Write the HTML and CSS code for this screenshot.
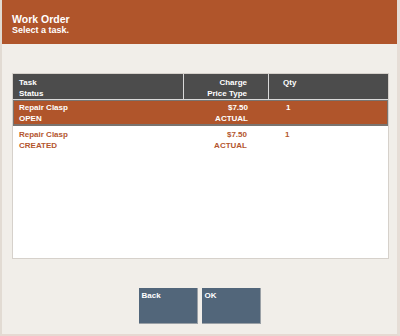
FILE: index.html
```html
<!DOCTYPE html>
<html lang="en">

<head>
  <meta charset="UTF-8" />
  <title>Work Order</title>
  <link rel="stylesheet" href="styles.css">
</head>

<body>

  <!-- Title bar -->
  <header class="title-bar">
    <div class="title">Work Order</div>
    <div class="subtitle">Select a task.</div>
  </header>

  <!-- Task list -->
  <div class="content">
    <div class="task-table">
      <div class="row head">
        <div class="cell">Task<br>Status</div>
        <div class="cell num">Charge<br>Price Type</div>
        <div class="cell qty">Qty</div>
      </div>
      <div class="row selected">
        <div class="cell">Repair Clasp<br>OPEN</div>
        <div class="cell num">$7.50<br>ACTUAL</div>
        <div class="cell qty">1</div>
      </div>
      <div class="row">
        <div class="cell">Repair Clasp<br>CREATED</div>
        <div class="cell num">$7.50<br>ACTUAL</div>
        <div class="cell qty">1</div>
      </div>
    </div>

    <!-- Buttons -->
    <div class="buttons">
      <button class="btn">Back</button>
      <button class="btn">OK</button>
    </div>
  </div>

</body>

</html>
```

FILE: styles.css
```css
body {
  margin: 0;
  width: 400px;
  height: 336px;
  background-color: #f1eee9;
  font-family: "Liberation Sans", Arial, sans-serif;
  font-weight: bold;
  box-sizing: border-box;
  border-left: 2px solid #e2dbd3;
  border-right: 3px solid #e6ddd6;
  border-bottom: 2px solid #e6d9d2;
}

/* Orange title bar */
.title-bar {
  background-color: #b0552b;
  color: #fff;
  height: 44px;
  box-sizing: border-box;
  padding: 14px 0 0 10px;
}

.title {
  font-size: 10.5px;
  line-height: 11px;
}

.subtitle {
  font-size: 9px;
  line-height: 10px;
}

.content {
  padding: 29px 0 0 10px;
}

/* Table */
.task-table {
  width: 377px;
  height: 186px;
  box-sizing: border-box;
  background-color: #fff;
  border: 1px solid #d6d1cb;
  font-size: 8px;
  line-height: 11px;
}

.row {
  display: grid;
  grid-template-columns: 170px 85px 1fr;
  height: 26px;
  box-sizing: border-box;
  color: #b4562e;
}

.cell {
  padding: 3px 6px 0 6px;
}

.cell.num {
  text-align: right;
  padding-right: 21px;
}

.cell.qty {
  padding-left: 17px;
}

.head {
  background-color: #4c4c4c;
  color: #fff;
  border-bottom: 1px solid #d9d9d9;
}

.head .cell + .cell {
  border-left: 1px solid #d9d9d9;
}

.head .cell.qty {
  padding-left: 14px;
}

.selected {
  background-color: #b0552b;
  color: #fff;
  border: 1px solid #7a7470;
  border-width: 1px 1px 2px 1px;
}

.selected .cell {
  padding-top: 1px;
}

.selected .cell:first-child {
  padding-left: 5px;
}

/* Buttons */
.buttons {
  display: flex;
  justify-content: center;
  gap: 4px;
  margin-top: 29px;
  padding-right: 10px;
}

.btn {
  width: 59px;
  height: 36px;
  padding: 3px 0 0 3px;
  display: flex;
  align-items: flex-start;
  background-color: #52667a;
  color: #fff;
  border: none;
  border-right: 1px solid #9aa0a6;
  border-bottom: 1px solid #9aa0a6;
  font-family: "Liberation Sans", Arial, sans-serif;
  font-weight: bold;
  font-size: 8px;
}
```
